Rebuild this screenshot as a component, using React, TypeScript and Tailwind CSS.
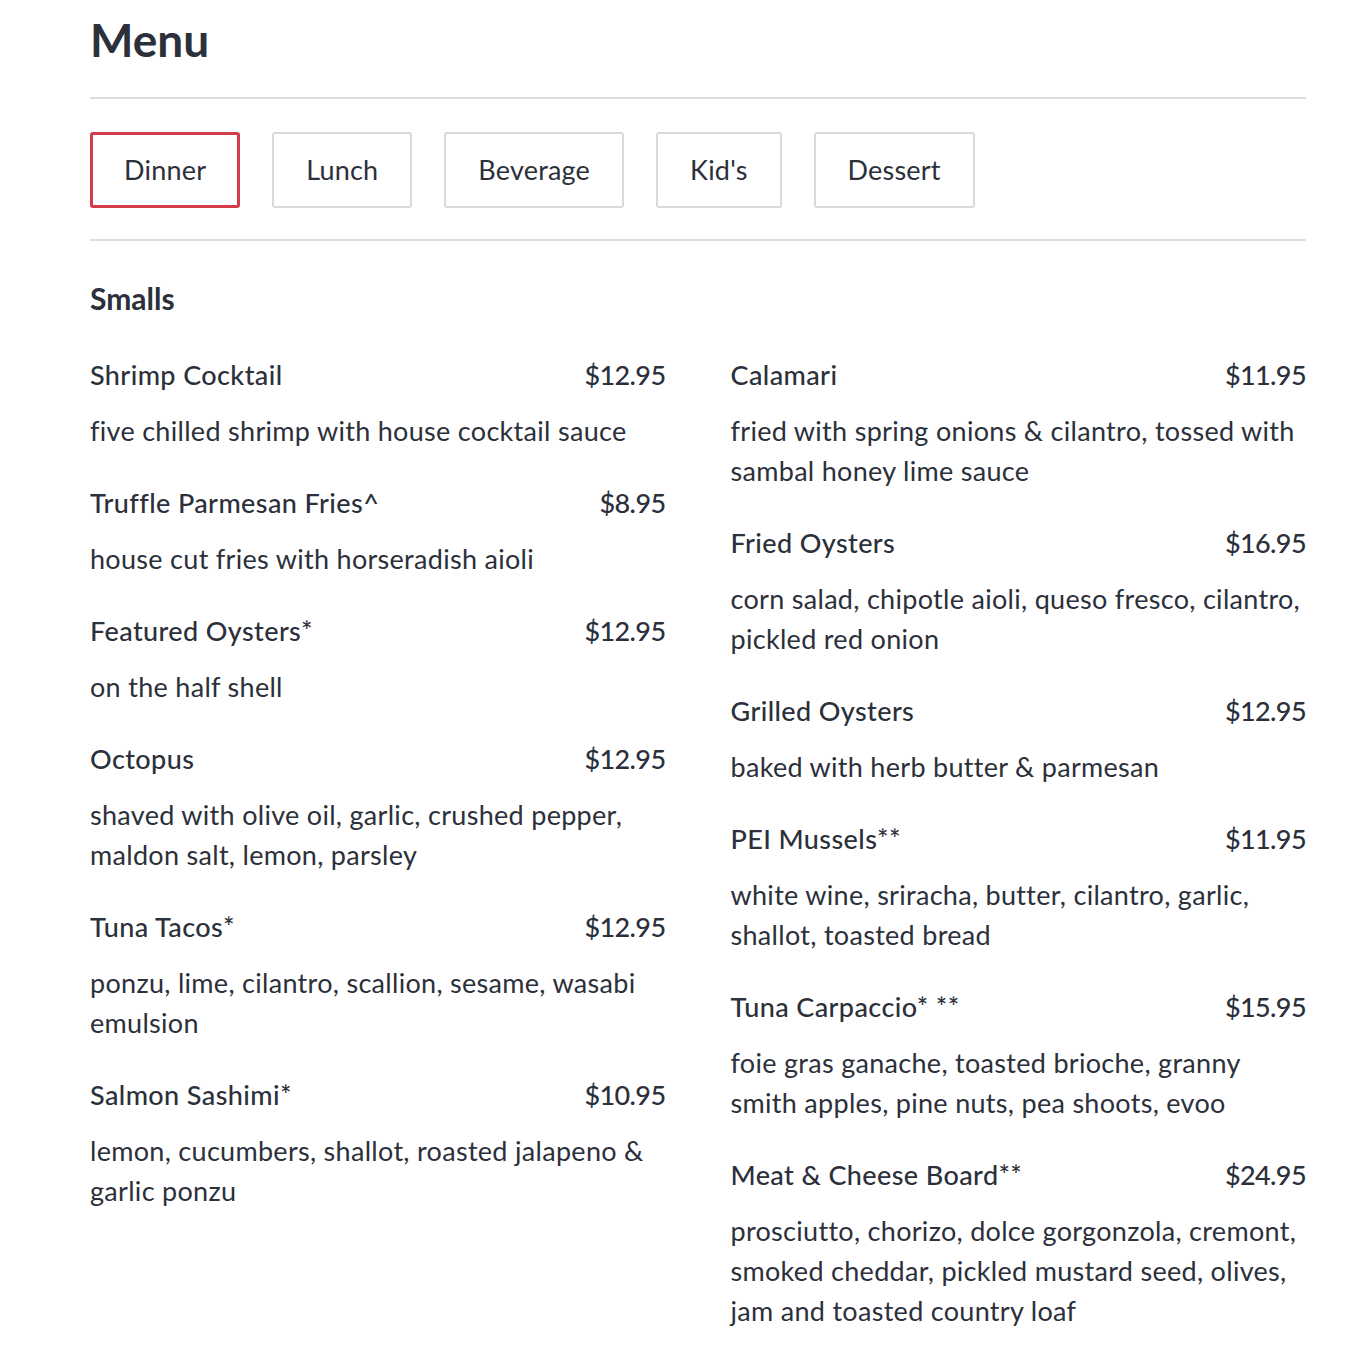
const left = [
  { name: "Shrimp Cocktail", price: "$12.95", desc: "five chilled shrimp with house cocktail sauce" },
  { name: "Truffle Parmesan Fries^", price: "$8.95", desc: "house cut fries with horseradish aioli" },
  { name: "Featured Oysters*", price: "$12.95", desc: "on the half shell" },
  { name: "Octopus", price: "$12.95", desc: "shaved with olive oil, garlic, crushed pepper, maldon salt, lemon, parsley" },
  { name: "Tuna Tacos*", price: "$12.95", desc: "ponzu, lime, cilantro, scallion, sesame, wasabi emulsion" },
  { name: "Salmon Sashimi*", price: "$10.95", desc: "lemon, cucumbers, shallot, roasted jalapeno & garlic ponzu" },
];

const right = [
  { name: "Calamari", price: "$11.95", desc: "fried with spring onions & cilantro, tossed with sambal honey lime sauce" },
  { name: "Fried Oysters", price: "$16.95", desc: "corn salad, chipotle aioli, queso fresco, cilantro, pickled red onion" },
  { name: "Grilled Oysters", price: "$12.95", desc: "baked with herb butter & parmesan" },
  { name: "PEI Mussels**", price: "$11.95", desc: "white wine, sriracha, butter, cilantro, garlic, shallot, toasted bread" },
  { name: "Tuna Carpaccio* **", price: "$15.95", desc: "foie gras ganache, toasted brioche, granny smith apples, pine nuts, pea shoots, evoo" },
  { name: "Meat & Cheese Board**", price: "$24.95", desc: "prosciutto, chorizo, dolce gorgonzola, cremont, smoked cheddar, pickled mustard seed, olives, jam and toasted country loaf" },
];

const tabs = ["Dinner", "Lunch", "Beverage", "Kid's", "Dessert"];

type Item = { name: string; price: string; desc: string };

function MenuItem({ item }: { item: Item }) {
  return (
    <div className="mb-8">
      <div className="flex justify-between items-center text-[27px] leading-[40px] font-medium">
        <span className="tracking-[0.4px]">{item.name}</span>
        <span className="tracking-[-0.6px]">{item.price}</span>
      </div>
      <p className="mt-4 text-[27px] leading-[40px] tracking-[0.3px]">{item.desc}</p>
    </div>
  );
}

export default function App() {
  return (
    <div className="bg-white min-h-screen text-[#2b303a] font-['Lato',sans-serif]">
      <div className="ml-[90px] w-[1216px] pt-[10px]">
        <h1 className="text-[46px] leading-[60px] font-bold">Menu</h1>
        <div className="mt-[27px] h-[2px] bg-[#dedede]" />
        <div className="flex gap-8 mt-[33px]">
          {tabs.map((t, i) => (
            <button
              key={t}
              className={
                i === 0
                  ? "h-[76px] px-[31px] rounded-[3px] border-[3px] border-[#d33c49] text-[27px] tracking-[0.2px]"
                  : "h-[76px] px-[32px] rounded-[3px] border-2 border-[#dadada] text-[27px] tracking-[0.2px]"
              }
            >
              {t}
            </button>
          ))}
        </div>
        <div className="mt-[31px] h-[2px] bg-[#dedede]" />
        <h2 className="mt-[37px] text-[30px] leading-[40px] font-bold">Smalls</h2>
        <div className="mt-[37px] grid grid-cols-2 gap-x-[65px]">
          <div>
            {left.map((it) => (
              <MenuItem key={it.name} item={it} />
            ))}
          </div>
          <div>
            {right.map((it) => (
              <MenuItem key={it.name} item={it} />
            ))}
          </div>
        </div>
      </div>
    </div>
  );
}
